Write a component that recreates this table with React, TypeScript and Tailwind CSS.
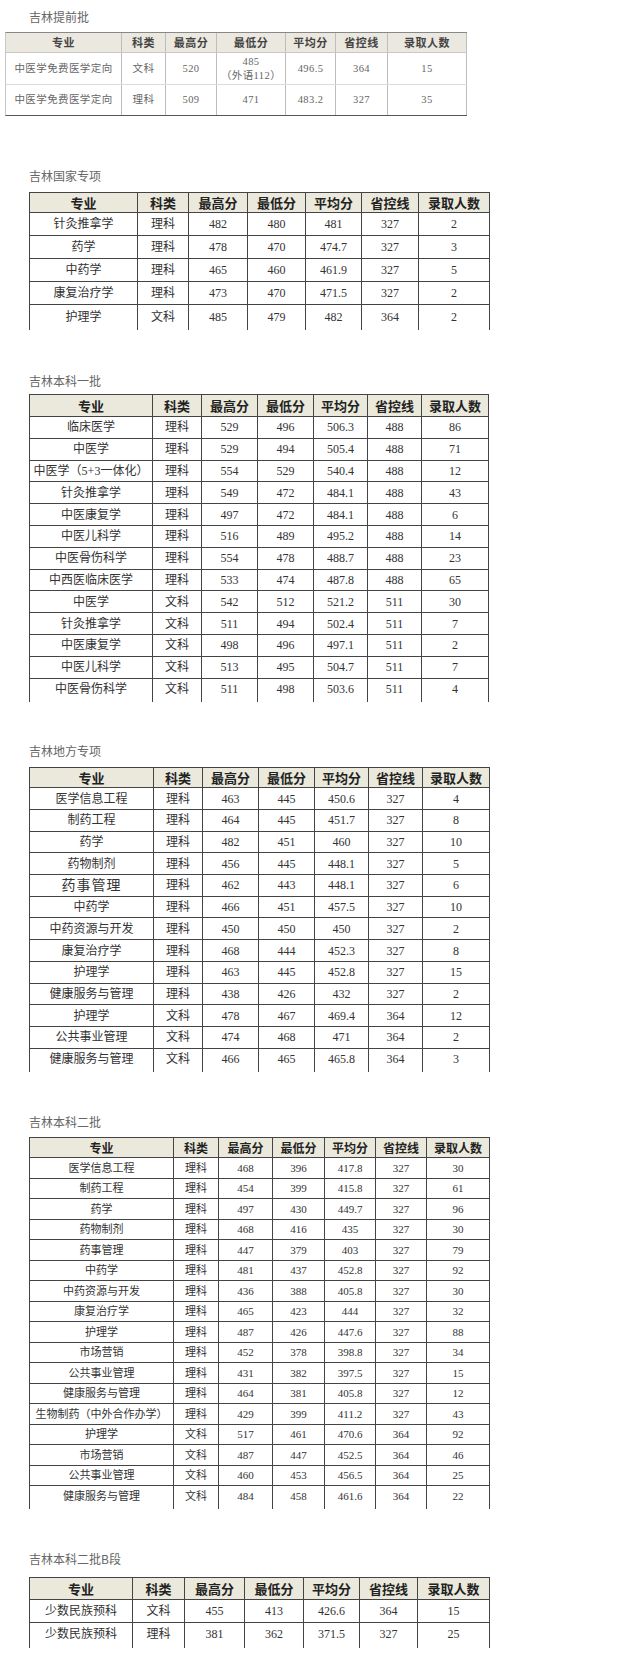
import type { ReactNode } from "react";

type Row = string[];

const HEAD = ["专业", "科类", "最高分", "最低分", "平均分", "省控线", "录取人数"];

const serif = "font-['Liberation_Serif','Noto_Sans_CJK_SC',serif]";
const sans = "font-['Noto_Sans_CJK_SC',sans-serif]";

const national: Row[] = [
  ["针灸推拿学", "理科", "482", "480", "481", "327", "2"],
  ["药学", "理科", "478", "470", "474.7", "327", "3"],
  ["中药学", "理科", "465", "460", "461.9", "327", "5"],
  ["康复治疗学", "理科", "473", "470", "471.5", "327", "2"],
  ["护理学", "文科", "485", "479", "482", "364", "2"],
];

const firstBatch: Row[] = [
  ["临床医学", "理科", "529", "496", "506.3", "488", "86"],
  ["中医学", "理科", "529", "494", "505.4", "488", "71"],
  ["中医学（5+3一体化）", "理科", "554", "529", "540.4", "488", "12"],
  ["针灸推拿学", "理科", "549", "472", "484.1", "488", "43"],
  ["中医康复学", "理科", "497", "472", "484.1", "488", "6"],
  ["中医儿科学", "理科", "516", "489", "495.2", "488", "14"],
  ["中医骨伤科学", "理科", "554", "478", "488.7", "488", "23"],
  ["中西医临床医学", "理科", "533", "474", "487.8", "488", "65"],
  ["中医学", "文科", "542", "512", "521.2", "511", "30"],
  ["针灸推拿学", "文科", "511", "494", "502.4", "511", "7"],
  ["中医康复学", "文科", "498", "496", "497.1", "511", "2"],
  ["中医儿科学", "文科", "513", "495", "504.7", "511", "7"],
  ["中医骨伤科学", "文科", "511", "498", "503.6", "511", "4"],
];

const local: Row[] = [
  ["医学信息工程", "理科", "463", "445", "450.6", "327", "4"],
  ["制药工程", "理科", "464", "445", "451.7", "327", "8"],
  ["药学", "理科", "482", "451", "460", "327", "10"],
  ["药物制剂", "理科", "456", "445", "448.1", "327", "5"],
  ["药事管理", "理科", "462", "443", "448.1", "327", "6"],
  ["中药学", "理科", "466", "451", "457.5", "327", "10"],
  ["中药资源与开发", "理科", "450", "450", "450", "327", "2"],
  ["康复治疗学", "理科", "468", "444", "452.3", "327", "8"],
  ["护理学", "理科", "463", "445", "452.8", "327", "15"],
  ["健康服务与管理", "理科", "438", "426", "432", "327", "2"],
  ["护理学", "文科", "478", "467", "469.4", "364", "12"],
  ["公共事业管理", "文科", "474", "468", "471", "364", "2"],
  ["健康服务与管理", "文科", "466", "465", "465.8", "364", "3"],
];

const secondBatch: Row[] = [
  ["医学信息工程", "理科", "468", "396", "417.8", "327", "30"],
  ["制药工程", "理科", "454", "399", "415.8", "327", "61"],
  ["药学", "理科", "497", "430", "449.7", "327", "96"],
  ["药物制剂", "理科", "468", "416", "435", "327", "30"],
  ["药事管理", "理科", "447", "379", "403", "327", "79"],
  ["中药学", "理科", "481", "437", "452.8", "327", "92"],
  ["中药资源与开发", "理科", "436", "388", "405.8", "327", "30"],
  ["康复治疗学", "理科", "465", "423", "444", "327", "32"],
  ["护理学", "理科", "487", "426", "447.6", "327", "88"],
  ["市场营销", "理科", "452", "378", "398.8", "327", "34"],
  ["公共事业管理", "理科", "431", "382", "397.5", "327", "15"],
  ["健康服务与管理", "理科", "464", "381", "405.8", "327", "12"],
  ["生物制药（中外合作办学）", "理科", "429", "399", "411.2", "327", "43"],
  ["护理学", "文科", "517", "461", "470.6", "364", "92"],
  ["市场营销", "文科", "487", "447", "452.5", "364", "46"],
  ["公共事业管理", "文科", "460", "453", "456.5", "364", "25"],
  ["健康服务与管理", "文科", "484", "458", "461.6", "364", "22"],
];

const secondB: Row[] = [
  ["少数民族预科", "文科", "455", "413", "426.6", "364", "15"],
  ["少数民族预科", "理科", "381", "362", "371.5", "327", "25"],
];

function Title({ children, gap }: { children: ReactNode; gap: string }) {
  return (
    <div className={`ml-[29px] h-5 text-[12px] leading-5 text-[#666] ${sans} ${gap}`}>
      {children}
    </div>
  );
}

interface TableProps {
  cols: string[];
  rows: Row[];
  headH: string;
  rowH: string;
  bodySize: string;
  headSize: string;
  bigRow?: number;
}

function ScoreTable({ cols, rows, headH, rowH, bodySize, headSize, bigRow }: TableProps) {
  return (
    <div className="ml-[29px] flex w-fit flex-col border-l border-t border-[#444]">
      <div className={`flex ${headH} border-b border-[#444] bg-[#ebe9dc]`}>
        {HEAD.map((h, i) => (
          <div
            key={h}
            className={`${cols[i]} flex items-center justify-center border-r border-[#444] ${headSize} font-bold text-[#222] ${sans}`}
          >
            {h}
          </div>
        ))}
      </div>
      {rows.map((r, ri) => (
        <div
          key={ri}
          className={`flex ${rowH} ${ri < rows.length - 1 ? "border-b border-[#444]" : ""}`}
        >
          {r.map((c, ci) => (
            <div
              key={ci}
              className={`${cols[ci]} flex items-center justify-center whitespace-nowrap border-r border-[#444] text-[#333] ${serif} ${
                ri === bigRow && ci === 0 ? "text-[14px] tracking-[1px]" : bodySize
              }`}
            >
              {c}
            </div>
          ))}
        </div>
      ))}
      {/* vertical rules run a little past the last row */}
      <div className="flex h-[2px]">
        {cols.map((w, i) => (
          <div key={i} className={`${w} border-r border-[#444]`} />
        ))}
      </div>
    </div>
  );
}

function EarlyTable() {
  const cols = ["w-[116px]", "w-[44px]", "w-[51px]", "w-[69px]", "w-[50px]", "w-[52px]", "w-[79px]"];
  const rows: { cells: ReactNode[]; h: string }[] = [
    {
      h: "h-[32px]",
      cells: [
        "中医学免费医学定向",
        "文科",
        "520",
        <span key="x" className="flex flex-col items-center leading-[14px]">
          <span>485</span>
          <span>（外语112）</span>
        </span>,
        "496.5",
        "364",
        "15",
      ],
    },
    {
      h: "h-[30px]",
      cells: ["中医学免费医学定向", "理科", "509", "471", "483.2", "327", "35"],
    },
  ];
  return (
    <div className="ml-[5px] flex w-fit flex-col border-l border-t border-b border-l-[#c8c8c8] border-t-[#888] border-b-[#555]">
      <div className="flex h-[20px] border-b border-[#c8c8c8] bg-[#ebe8df]">
        {HEAD.map((h, i) => (
          <div
            key={h}
            className={`${cols[i]} flex items-center justify-center border-r border-[#bdbdbd] text-[11px] font-bold tracking-[0.5px] text-[#444] ${sans}`}
          >
            {h}
          </div>
        ))}
      </div>
      {rows.map((r, ri) => (
        <div key={ri} className={`flex ${r.h} ${ri === 0 ? "border-b border-[#dcdcdc]" : ""}`}>
          {r.cells.map((c, ci) => (
            <div
              key={ci}
              className={`${cols[ci]} flex items-center justify-center whitespace-nowrap border-r border-[#bdbdbd] text-[10.5px] tracking-[0.4px] text-[#666] ${serif}`}
            >
              {c}
            </div>
          ))}
        </div>
      ))}
    </div>
  );
}

export default function App() {
  return (
    <div className="min-h-[1663px] w-[622px] bg-white">
      <div className="h-[7px]" />
      <Title gap="mb-[5px]">吉林提前批</Title>
      <EarlyTable />

      <div className="h-[50px]" />
      <Title gap="mb-[6px]">吉林国家专项</Title>
      <ScoreTable
        cols={["w-[108px]", "w-[51px]", "w-[59px]", "w-[58px]", "w-[56px]", "w-[57px]", "w-[71px]"]}
        rows={national}
        headH="h-[20px]"
        rowH="h-[23px]"
        bodySize="text-[12px]"
        headSize="text-[13px]"
      />

      <div className="h-[41px]" />
      <Title gap="mb-[3px]">吉林本科一批</Title>
      <ScoreTable
        cols={["w-[123px]", "w-[49px]", "w-[56px]", "w-[56px]", "w-[54px]", "w-[54px]", "w-[67px]"]}
        rows={firstBatch}
        headH="h-[22px]"
        rowH="h-[21.8px]"
        bodySize="text-[12px]"
        headSize="text-[13px]"
      />

      <div className="h-[39px]" />
      <Title gap="mb-[6px]">吉林地方专项</Title>
      <ScoreTable
        cols={["w-[124px]", "w-[49px]", "w-[56px]", "w-[56px]", "w-[54px]", "w-[54px]", "w-[67px]"]}
        rows={local}
        headH="h-[20px]"
        rowH="h-[21.7px]"
        bodySize="text-[12px]"
        headSize="text-[13px]"
        bigRow={4}
      />

      <div className="h-[40px]" />
      <Title gap="mb-[5px]">吉林本科二批</Title>
      <ScoreTable
        cols={["w-[144px]", "w-[45px]", "w-[54px]", "w-[52px]", "w-[51px]", "w-[51px]", "w-[63px]"]}
        rows={secondBatch}
        headH="h-[20px]"
        rowH="h-[20.5px]"
        bodySize="text-[11px]"
        headSize="text-[12px]"
      />

      <div className="h-[40px]" />
      <Title gap="mb-[8px]">吉林本科二批B段</Title>
      <ScoreTable
        cols={["w-[103px]", "w-[52px]", "w-[60px]", "w-[59px]", "w-[56px]", "w-[58px]", "w-[72px]"]}
        rows={secondB}
        headH="h-[22px]"
        rowH="h-[23px]"
        bodySize="text-[12px]"
        headSize="text-[13px]"
      />
    </div>
  );
}
